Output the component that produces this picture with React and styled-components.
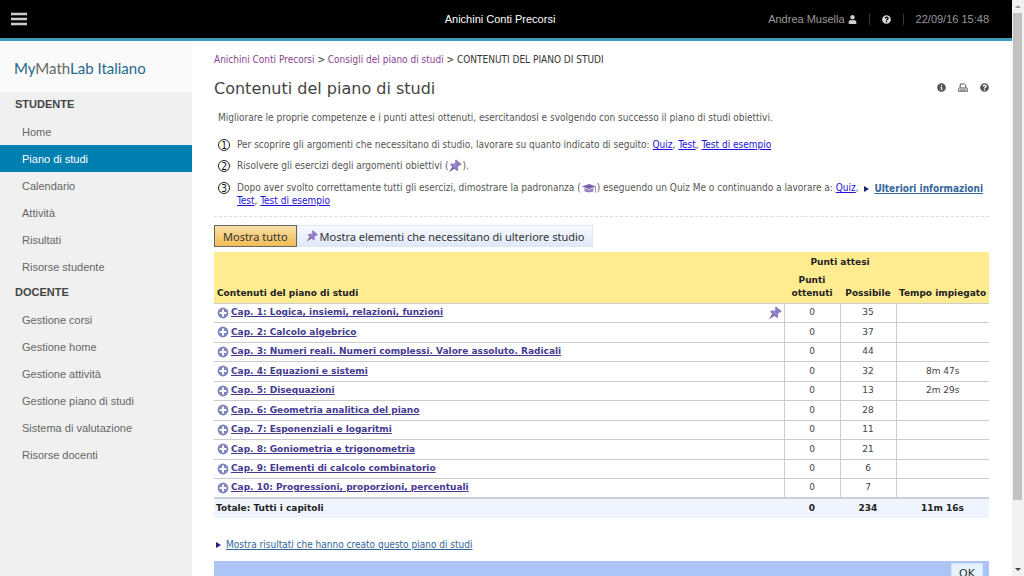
import React from 'react';
import styled, { createGlobalStyle, css } from 'styled-components';
import { FaInfoCircle, FaQuestionCircle, FaUser } from 'react-icons/fa';

const verdana = '"DejaVu Sans", Verdana, sans-serif';
const tahoma = '"DejaVu Sans Condensed", Tahoma, sans-serif';
const noto = '"Noto Sans", Tahoma, sans-serif';
const arial = '"Liberation Sans", Arial, sans-serif';

const GlobalStyle = createGlobalStyle`
  * {
    box-sizing: border-box;
  }
  body {
    margin: 0;
    background: #fff;
    font-family: ${tahoma};
    font-size: 10px;
    color: #555;
    overflow: hidden;
  }
`;

const Page = styled.div`
  display: grid;
  grid-template-columns: 1fr 12px;
  height: 100vh;
`;

const Screen = styled.div`
  display: flex;
  flex-direction: column;
  min-width: 0;
  overflow: hidden;
`;

const TopBar = styled.header`
  display: grid;
  grid-template-columns: 1fr auto 1fr;
  align-items: center;
  flex: none;
  height: 41px;
  padding: 0 23px 0 11px;
  background: #000;
  border-bottom: 3px solid #3c9cbc;
  font-family: ${arial};
  font-size: 11px;
  color: #999;
`;

const MenuButton = styled.button`
  display: flex;
  justify-self: start;
  padding: 0;
  border: 0;
  background: none;
  color: #ccc;
`;

const CourseName = styled.div`
  color: #fff;
`;

const TopRight = styled.div`
  display: flex;
  align-items: center;
  justify-content: flex-end;
  gap: 12px;
`;

const UserName = styled.span`
  display: flex;
  align-items: center;
  gap: 3px;
`;

const Divider = styled.span`
  width: 1px;
  height: 11px;
  background: #3a3a3a;
`;

const Body = styled.div`
  display: flex;
  flex: 1;
  min-height: 0;
`;

const Sidebar = styled.nav`
  flex: none;
  width: 192px;
  background: #f0f0f0;
  font-family: ${arial};
`;

const Logo = styled.div`
  height: 51px;
  padding-left: 14px;
  background: #fafafa;
  font-family: Lato, sans-serif;
  font-size: 15px;
  line-height: 54px;
  color: #1f6a8c;
  span {
    color: #666;
  }
`;

const SectionTitle = styled.h2`
  height: 26px;
  margin: 0;
  padding-left: 15px;
  font-size: 11px;
  line-height: 25px;
  color: #444;
`;

const NavLink = styled.a`
  display: block;
  height: 27px;
  padding-left: 22px;
  font-size: 11px;
  line-height: 28px;
  color: #666;
  text-decoration: none;
  ${({ $active }) =>
    $active &&
    css`
      background: #0080b0;
      color: #fff;
    `}
`;

const Main = styled.main`
  flex: 1;
  min-width: 0;
  padding: 12px 23px 0 22px;
`;

const Breadcrumb = styled.div`
  line-height: 14px;
  color: #333;
  a {
    color: #8a3f92;
    text-decoration: none;
  }
`;

const TitleRow = styled.div`
  display: flex;
  align-items: center;
  justify-content: space-between;
  height: 24px;
  margin-top: 9px;
`;

const Title = styled.h1`
  margin: 0;
  font-family: ${verdana};
  font-size: 16px;
  font-weight: normal;
  color: #444;
`;

const Tools = styled.div`
  display: flex;
  gap: 12px;
`;

const ToolButton = styled.button`
  display: flex;
  padding: 0;
  border: 0;
  background: none;
  color: #555;
`;

const Intro = styled.p`
  margin: 12px 0 14px;
  padding-left: 4px;
  line-height: 12px;
`;

const StepsRow = styled.div`
  display: flex;
  align-items: flex-end;
  justify-content: space-between;
  padding: 0 6px 9px 4px;
  border-bottom: 1px dashed #ddd;
`;

const MoreInfo = styled.div`
  padding-bottom: 11px;
`;

const Steps = styled.ol`
  display: flex;
  flex-direction: column;
  flex: 1;
  gap: 8px;
  max-width: 645px;
  margin: 0;
  padding: 0;
  list-style: none;
`;

const Step = styled.li`
  display: grid;
  grid-template-columns: 12px 1fr;
  gap: 7px;
  line-height: 13px;
  a {
    color: #2211dd;
  }
  p {
    margin: 0;
  }
  svg {
    vertical-align: middle;
  }
`;

const StepNumber = styled.span`
  display: flex;
  align-items: center;
  justify-content: center;
  width: 12px;
  height: 12px;
  margin-top: 1px;
  border: 1px solid #222;
  border-radius: 50%;
  font-size: 10px;
  color: #111;
`;

const ArrowLink = styled.a`
  display: inline-flex;
  align-items: center;
  gap: 5px;
  line-height: 14px;
  font-weight: ${({ $strong }) => ($strong ? 'bold' : 'normal')};
  color: #336699;
  text-decoration: none;
  white-space: nowrap;
  span {
    text-decoration: underline;
  }
  &::before {
    content: '';
    border: 3px solid transparent;
    border-left: 5px solid #222277;
    border-right: 0;
  }
`;

const Filters = styled.div`
  display: flex;
  margin-top: 8px;
`;

const FilterButton = styled.button`
  display: flex;
  align-items: center;
  gap: 2px;
  height: 22px;
  padding: 0 8px;
  border: 1px solid ${({ $active }) => ($active ? '#666' : '#dfe7f3')};
  background: ${({ $active }) =>
    $active
      ? 'linear-gradient(#f8dfa4, #f3bd56)'
      : 'linear-gradient(#f7f9fe, #dfe9f8)'};
  font-family: ${noto};
  font-size: 11px;
  color: #333;
`;

const Table = styled.table`
  width: 100%;
  margin-top: 5px;
  border-collapse: collapse;
  table-layout: fixed;
  font-family: ${verdana};
  font-size: 9px;
  line-height: 13px;
  th,
  td {
    padding: 0 2px;
    text-align: center;
  }
  th[scope='row'],
  th[rowspan]:first-child,
  td:first-child {
    text-align: left;
  }
`;

const HeadRow = styled.tr`
  height: ${({ $height }) => $height}px;
  background: #ffec91;
  color: #222;
  th {
    vertical-align: bottom;
    padding: 0 3px 3px;
    white-space: nowrap;
  }
`;

const ChapterRow = styled.tr`
  height: 19px;
  &:nth-child(even) {
    height: 20px;
  }
  td {
    border-top: 1px solid #ccc;
    color: #444;
  }
  td + td {
    border-left: 1px solid #ccc;
  }
`;

const Chapter = styled.div`
  display: flex;
  align-items: center;
  gap: 2px;
  padding-left: 1px;
  a {
    flex: 1;
    font-weight: bold;
    color: #443a90;
  }
`;

const TotalRow = styled.tr`
  height: 20px;
  border-top: 2px solid #ccd0d8;
  background: #eff5fe;
  color: #222;
`;

const Results = styled.div`
  margin-top: 20px;
  padding-left: 2px;
`;

const FooterBar = styled.div`
  display: flex;
  justify-content: flex-end;
  height: 30px;
  margin-top: 9px;
  padding: 2px 6px;
  background: #acc5f6;
`;

const OkButton = styled.button`
  width: 32px;
  height: 20px;
  padding: 0;
  border: 1px solid #d4e4fa;
  background: #e6f2fc;
  font-family: ${verdana};
  font-size: 11px;
  color: #333;
`;

const ScrollTrack = styled.div`
  display: flex;
  flex-direction: column;
  justify-content: space-between;
  align-items: center;
  padding: 5px 0;
  background: #f1f1f1;
`;

const ScrollThumb = styled.div`
  flex: 1;
  align-self: stretch;
  margin: 5px 2px 68px 1px;
  background: #c1c1c1;
`;

const ScrollArrow = styled.div`
  border: 3px solid transparent;
  ${({ $up }) =>
    $up
      ? 'border-top: 0; border-bottom: 3px solid #999;'
      : 'border-bottom: 0; border-top: 3px solid #444;'}
`;

const Pin = ({ size = 14 }) => (
  <svg width={size} height={size} viewBox="0 0 14 14" aria-hidden="true">
    <path d="M4.6 7.6 6.6 9.6 .6 13.6Z" fill="#6b6680" />
    <path
      d="M8 .4 13.7 5.2 12.6 6.6 11.5 6.3 9.9 8.2 10.3 10.8 9 12.2 2 5.8 3.2 4.4 5.8 4.7 7.4 3 7 1.6Z"
      fill="#8f78c4"
    />
    <path d="M8.2 3 6.2 5.6 8.6 7.9" fill="none" stroke="#b7a6de" />
  </svg>
);

const Cap = () => (
  <svg width="16" height="12" viewBox="0 0 16 12" aria-hidden="true">
    <path d="M8 2 15 4.4 8 7 1 4.4Z" fill="#7d5fae" />
    <path d="M3.5 6V9.2C5.5 10.6 10.5 10.6 12.5 9.2V6L8 7.8Z" fill="#9a80c6" />
    <path d="M14.5 4.5V10.5" stroke="#a78fce" />
  </svg>
);

const Plus = () => (
  <svg width="12" height="12" viewBox="0 0 12 12" aria-hidden="true">
    <circle cx="6" cy="6" r="5.4" fill="#7f86bd" />
    <path d="M6 2.6V9.4M2.6 6H9.4" stroke="#fff" strokeWidth="2" />
  </svg>
);

const Bars = () => (
  <svg width="16" height="14" viewBox="0 0 16 14" aria-hidden="true">
    <path
      d="M0 2H16M0 7H16M0 12H16"
      stroke="currentColor"
      strokeWidth="2.4"
    />
  </svg>
);

const Printer = () => (
  <svg width="10" height="10" viewBox="0 0 10 10" aria-hidden="true">
    <path
      d="M2.2 5V1H6.6L7.8 2.2V5M.6 8.2V6.2Q.6 5 1.6 5H8.4Q9.4 5 9.4 6.2V8.2ZM2.2 7H7.8"
      fill="none"
      stroke="currentColor"
    />
  </svg>
);

const menu = [
  {
    title: 'STUDENTE',
    links: [
      'Home',
      'Piano di studi',
      'Calendario',
      'Attività',
      'Risultati',
      'Risorse studente',
    ],
  },
  {
    title: 'DOCENTE',
    links: [
      'Gestione corsi',
      'Gestione home',
      'Gestione attività',
      'Gestione piano di studi',
      'Sistema di valutazione',
      'Risorse docenti',
    ],
  },
];

const chapters = [
  { name: 'Cap. 1: Logica, insiemi, relazioni, funzioni', max: 35, pin: true },
  { name: 'Cap. 2: Calcolo algebrico', max: 37 },
  {
    name: 'Cap. 3: Numeri reali. Numeri complessi. Valore assoluto. Radicali',
    max: 44,
  },
  { name: 'Cap. 4: Equazioni e sistemi', max: 32, time: '8m 47s' },
  { name: 'Cap. 5: Disequazioni', max: 13, time: '2m 29s' },
  { name: 'Cap. 6: Geometria analitica del piano', max: 28 },
  { name: 'Cap. 7: Esponenziali e logaritmi', max: 11 },
  { name: 'Cap. 8: Goniometria e trigonometria', max: 21 },
  { name: 'Cap. 9: Elementi di calcolo combinatorio', max: 6 },
  { name: 'Cap. 10: Progressioni, proporzioni, percentuali', max: 7 },
];

const PracticeLinks = () => (
  <>
    <a href="#quiz">Quiz</a>, <a href="#test">Test</a>,{' '}
    <a href="#esempio">Test di esempio</a>
  </>
);

export default function App() {
  return (
    <Page>
      <GlobalStyle />
      <Screen>
        <TopBar>
          <MenuButton aria-label="Menu">
            <Bars />
          </MenuButton>
          <CourseName>Anichini Conti Precorsi</CourseName>
          <TopRight>
            <UserName>
              Andrea Musella <FaUser size={9} color="#ccc" />
            </UserName>
            <Divider />
            <FaQuestionCircle size={9} color="#ddd" />
            <Divider />
            <span>22/09/16 15:48</span>
          </TopRight>
        </TopBar>
        <Body>
          <Sidebar>
            <Logo>
              My<span>Math</span>Lab Italiano
            </Logo>
            {menu.map(({ title, links }) => (
              <div key={title}>
                <SectionTitle>{title}</SectionTitle>
                {links.map((link) => (
                  <NavLink
                    key={link}
                    href="#menu"
                    $active={link === 'Piano di studi'}
                  >
                    {link}
                  </NavLink>
                ))}
              </div>
            ))}
          </Sidebar>
          <Main>
            <Breadcrumb>
              <a href="#corso">Anichini Conti Precorsi</a> &gt;{' '}
              <a href="#consigli">Consigli del piano di studi</a> &gt; CONTENUTI
              DEL PIANO DI STUDI
            </Breadcrumb>
            <TitleRow>
              <Title>Contenuti del piano di studi</Title>
              <Tools>
                <ToolButton aria-label="Informazioni">
                  <FaInfoCircle size={9} />
                </ToolButton>
                <ToolButton aria-label="Stampa">
                  <Printer />
                </ToolButton>
                <ToolButton aria-label="Guida">
                  <FaQuestionCircle size={9} />
                </ToolButton>
              </Tools>
            </TitleRow>
            <Intro>
              Migliorare le proprie competenze e i punti attesi ottenuti,
              esercitandosi e svolgendo con successo il piano di studi
              obiettivi.
            </Intro>
            <StepsRow>
              <Steps>
                <Step>
                  <StepNumber>1</StepNumber>
                  <p>
                    Per scoprire gli argomenti che necessitano di studio,
                    lavorare su quanto indicato di seguito: <PracticeLinks />
                  </p>
                </Step>
                <Step>
                  <StepNumber>2</StepNumber>
                  <p>
                    Risolvere gli esercizi degli argomenti obiettivi (
                    <Pin />
                    ).
                  </p>
                </Step>
                <Step>
                  <StepNumber>3</StepNumber>
                  <p>
                    Dopo aver svolto correttamente tutti gli esercizi,
                    dimostrare la padronanza (<Cap />) eseguendo un Quiz Me o
                    continuando a lavorare a: <PracticeLinks />
                  </p>
                </Step>
              </Steps>
              <MoreInfo>
                <ArrowLink href="#info" $strong>
                  <span>Ulteriori informazioni</span>
                </ArrowLink>
              </MoreInfo>
            </StepsRow>
            <Filters>
              <FilterButton $active>Mostra tutto</FilterButton>
              <FilterButton>
                <Pin size={12} />
                Mostra elementi che necessitano di ulteriore studio
              </FilterButton>
            </Filters>
            <Table>
              <colgroup>
                <col />
                <col width="56" />
                <col width="56" />
                <col width="93" />
              </colgroup>
              <thead>
                <HeadRow $height={20}>
                  <th rowSpan={2}>Contenuti del piano di studi</th>
                  <th colSpan={2}>Punti attesi</th>
                  <th rowSpan={2}>Tempo impiegato</th>
                </HeadRow>
                <HeadRow $height={31}>
                  <th>
                    Punti
                    <br />
                    ottenuti
                  </th>
                  <th>Possibile</th>
                </HeadRow>
              </thead>
              <tbody>
                {chapters.map(({ name, max, time, pin }) => (
                  <ChapterRow key={name}>
                    <td>
                      <Chapter>
                        <Plus />
                        <a href="#capitolo">{name}</a>
                        {pin && <Pin />}
                      </Chapter>
                    </td>
                    <td>0</td>
                    <td>{max}</td>
                    <td>{time}</td>
                  </ChapterRow>
                ))}
              </tbody>
              <tfoot>
                <TotalRow>
                  <th scope="row">Totale: Tutti i capitoli</th>
                  <th>0</th>
                  <th>234</th>
                  <th>11m 16s</th>
                </TotalRow>
              </tfoot>
            </Table>
            <Results>
              <ArrowLink href="#risultati">
                <span>Mostra risultati che hanno creato questo piano di studi</span>
              </ArrowLink>
            </Results>
            <FooterBar>
              <OkButton>OK</OkButton>
            </FooterBar>
          </Main>
        </Body>
      </Screen>
      <ScrollTrack>
        <ScrollArrow $up />
        <ScrollThumb />
        <ScrollArrow />
      </ScrollTrack>
    </Page>
  );
}
